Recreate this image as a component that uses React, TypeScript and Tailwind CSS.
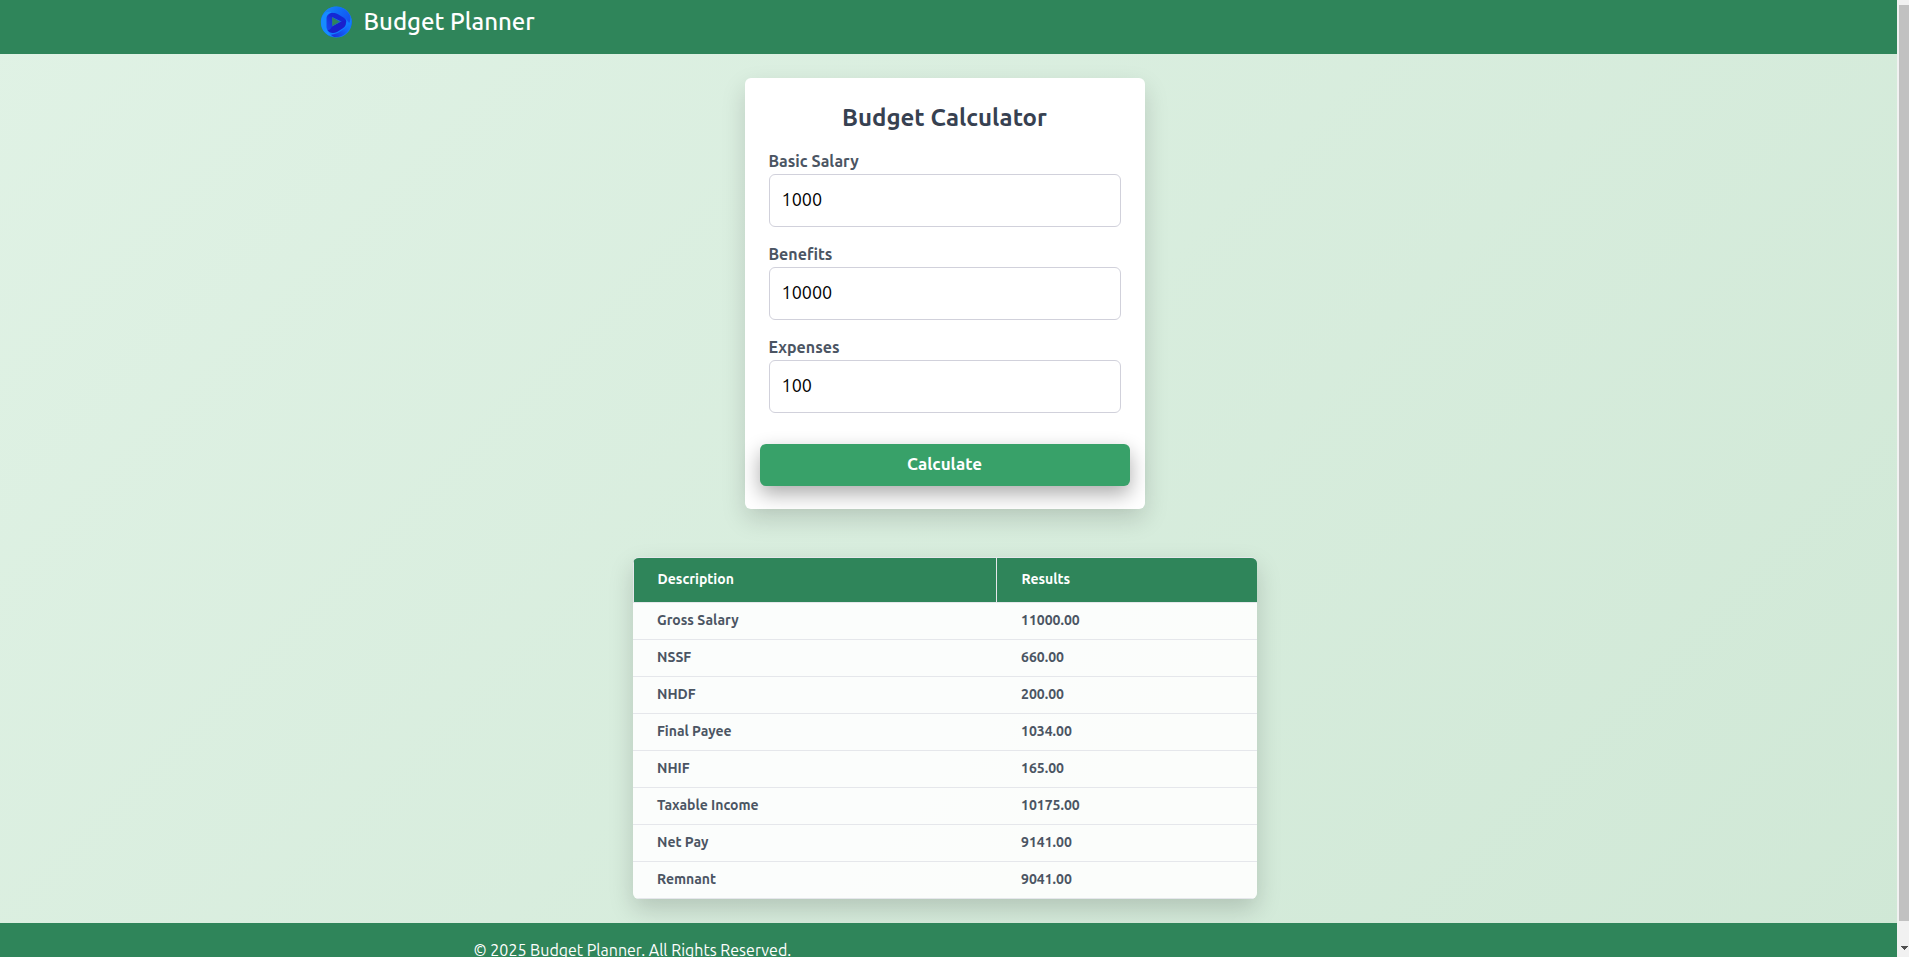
import { useId, useState } from "react";

const results = [
  ["Gross Salary", "11000.00"],
  ["NSSF", "660.00"],
  ["NHDF", "200.00"],
  ["Final Payee", "1034.00"],
  ["NHIF", "165.00"],
  ["Taxable Income", "10175.00"],
  ["Net Pay", "9141.00"],
  ["Remnant", "9041.00"],
];

function Logo() {
  return (
    <svg className="size-8" viewBox="0 1 32 32" aria-hidden="true">
      <defs>
        <linearGradient id="top" x1="0" y1="0" x2="1" y2="0.6">
          <stop offset="0" stopColor="#1e8cf0" />
          <stop offset="0.5" stopColor="#0f6df8" />
          <stop offset="1" stopColor="#1550f0" />
        </linearGradient>
        <linearGradient id="left" x1="0" y1="1" x2="0.7" y2="0">
          <stop offset="0" stopColor="#1550f0" />
          <stop offset="1" stopColor="#1a22cf" />
        </linearGradient>
        <linearGradient id="right" x1="1" y1="0" x2="0.1" y2="0.9">
          <stop offset="0" stopColor="#1090ff" />
          <stop offset="0.5" stopColor="#1266fb" />
          <stop offset="1" stopColor="#1a2fdc" />
        </linearGradient>
      </defs>
      <circle cx="16.300" cy="17" r="15.500" fill="#0f7cff" />
      <path d="M3 10C6 4 11 1.800 16.300 1.800c8.400 0 15.200 6.800 15.200 15.200 0 2-.5 4-1 5-1-5-4-8-8-10l-8-4C9 5.500 5 7 3 10Z" fill="url(#top)" />
      <path d="M30.500 11c2.500 8-.5 15-6.500 18.800-5 3-11 3-15.500.2 4 0 7-1 10-2.500l6-4c4-3 6.500-7 6-12.500Z" fill="url(#right)" />
      <path d="M3 10c-3 5-2.500 12 1 16.500 2.500 3 6 5 10 5.500-4-2-6.500-5-7-9V14c0-4 4-6.500 8-5.500-5-3-10-2-12 1.500Z" fill="#168cff" />
      <path d="M6.500 14c0-5 5-7.500 9-5.500L12.500 12v15c-3.500 0-6-2-6-5Z" fill="url(#left)" />
      <path d="M9 10.500c2-3 5.500-3 8.500-1.500l6 3.500c3 2 3.500 4 2 6L12 12c-2-1-3-1.500-3-1.500Z" fill="#1428d4" />
      <path d="M12 21.500l9-5 4-1c2 3 .5 6.500-2.500 8l-5.500 3.500c-4 2-8 1-9.500-2 2 .5 3.500-1 4.500-3.500Z" fill="#1a20cc" />
      <path d="M12 12v9.500l8.500-4.800Z" fill="#26719a" />
      <path d="M12.500 13v7.500l6.500-3.700Z" fill="#2f855a" />
    </svg>
  );
}

function Field({ label, initial }: { label: string; initial: string }) {
  const id = useId();
  const [value, setValue] = useState(initial);
  return (
    <div className="mb-4">
      <label htmlFor={id} className="mb-0.5 block text-base leading-[22px] font-semibold text-[#4b5563]">
        {label}
      </label>
      <input
        id={id}
        inputMode="numeric"
        value={value}
        onChange={(e) => setValue(e.target.value)}
        className="block h-[53px] w-full rounded-md border border-[#d1d1db] bg-white px-3 pb-1 text-lg text-black outline-none"
      />
    </div>
  );
}

export default function App() {
  return (
    <div className="flex h-screen overflow-hidden font-[Ubuntu,'Noto_Sans',sans-serif]">
      <div className="flex min-w-0 flex-1 flex-col overflow-hidden bg-linear-135 from-[#e0f2e5] to-[#d0e8d6]">
        <header className="shrink-0 bg-[#2f855a] pt-1.5 pr-2 pb-4">
          <div className="mx-auto flex max-w-7xl items-center gap-3 px-[15px]">
            <Logo />
            <h1 className="text-2xl leading-8 font-[550] text-white">Budget Planner</h1>
          </div>
        </header>

        <main className="flex shrink-0 flex-col items-center pt-6 pr-2 pb-6">
          <form
            onSubmit={(e) => e.preventDefault()}
            className="flex w-full max-w-[400px] flex-col rounded-md bg-white px-6 pt-6 pb-[23px] shadow-[0_10px_25px_rgba(0,0,0,0.15)]"
          >
            <h2 className="mb-4 text-center text-2xl leading-8 font-semibold text-[#374151]">Budget Calculator</h2>
            <Field label="Basic Salary" initial="1000" />
            <Field label="Benefits" initial="10000" />
            <Field label="Expenses" initial="100" />
            <button
              type="submit"
              className="-mx-[9px] mt-[15px] h-[42px] rounded-md bg-[#38a169] pb-0.5 text-[17px] font-semibold text-white shadow-[0_8px_20px_rgba(0,0,0,0.33)]"
            >
              Calculate
            </button>
          </form>

          <div className="mt-12 w-full max-w-[624px] overflow-hidden rounded-md border-t border-[#e5e7eb] bg-white/90 shadow-[0_10px_25px_rgba(0,0,0,0.17)]">
            <table className="w-full table-fixed border-collapse text-left text-sm">
              <thead>
                <tr className="bg-[#2f855a] text-white">
                  <th className="h-11 w-[363px] border-x border-b border-[#e5e7eb] pb-0.5 pl-6 font-semibold">Description</th>
                  <th className="border-b border-[#e5e7eb] pb-0.5 pl-[25px] font-semibold">Results</th>
                </tr>
              </thead>
              <tbody className="text-[#4b5563]">
                {results.map(([name, amount]) => (
                  <tr key={name} className="border-b border-[#e5e7eb]">
                    <td className="pt-[7px] pb-[9px] pl-6 font-semibold">{name}</td>
                    <td className="pt-[7px] pb-[9px] pl-[25px] font-semibold">{amount}</td>
                  </tr>
                ))}
              </tbody>
            </table>
          </div>
        </main>

        <footer className="flex-1 bg-[#2f855a] pt-[15px] pr-2">
          <p className="mx-auto max-w-[942px] text-base font-normal whitespace-nowrap text-white">
            © 2025 Budget Planner. All Rights Reserved.
          </p>
        </footer>
      </div>

      <div className="flex w-3 flex-col bg-[#f1f1f1] pt-[5px] pb-1.5 pl-0.5" aria-hidden="true">
        <div className="flex-1 bg-[#c1c1c1]" />
        <svg className="mt-[25px] ml-0.5 h-[5px] w-2" viewBox="0 0 8 5">
          <path d="M0 0h7v1h-1v1h-1v1h-1v1h-1v-1h-1v-1h-1v-1h-1Z" fill="#505050" />
        </svg>
      </div>
    </div>
  );
}
